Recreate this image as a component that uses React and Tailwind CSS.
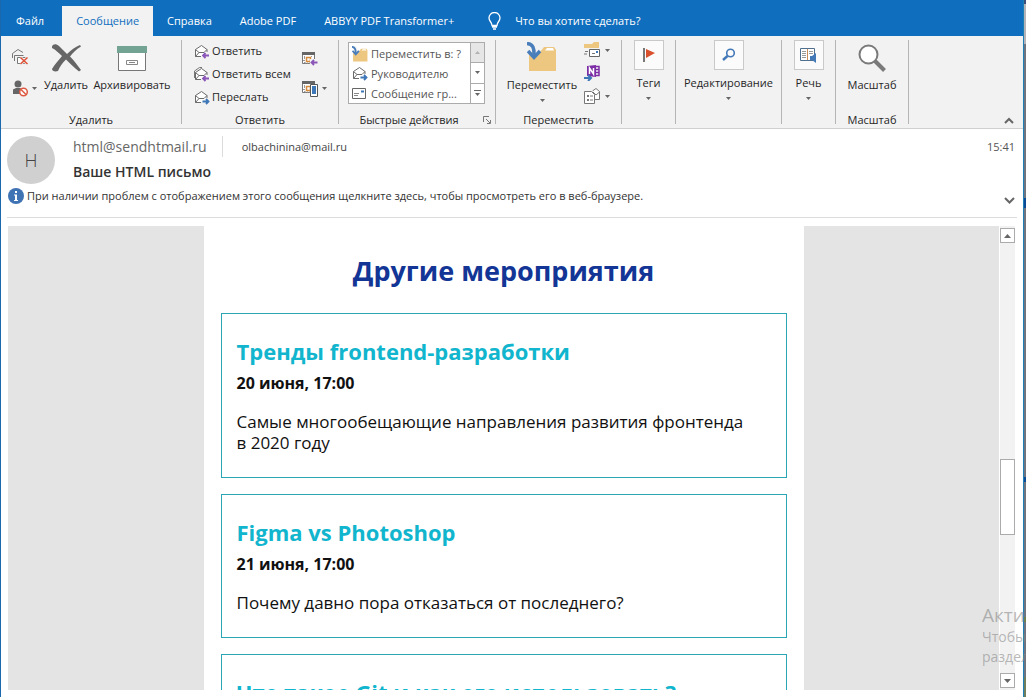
import React from 'react';

const ribbonFont = 'font-["Open_Sans","Noto_Sans",sans-serif]';

function Caret({ className = '' }) {
  return (
    <svg className={className} width="5" height="3" viewBox="0 0 5 3" aria-hidden="true">
      <path d="M0 0h5L2.5 3z" fill="#666" />
    </svg>
  );
}

function ScrollArrow({ className = '' }) {
  return (
    <svg className={className} width="7" height="4" viewBox="0 0 7 4" aria-hidden="true">
      <path d="M0 0h7L3.500 4z" fill="#666" />
    </svg>
  );
}

function Envelope({ arrow, stacked }) {
  return (
    <svg width="16" height="16" viewBox="0 0 16 16" fill="none" aria-hidden="true">
      {stacked && <path d="M.5 11V4L5.500.5H8" stroke="#777" />}
      <path d="M7 12.500H1.500v-7L7.500 1.500l5.500 4V8" fill="#fff" stroke="#6b6b6b" />
      <path d="M1.500 5.500 5 8.500h5l3-3M5 8.500l-3.500 4" stroke="#6b6b6b" />
      {arrow === 'left' ? (
        <path d="M15 11.500H9.500M11.500 9 9 11.500l2.500 2.500" stroke="#8a56b8" strokeWidth="1.800" />
      ) : (
        <path d="M8.500 11.500H14M12 9l2.500 2.500L12 14" stroke="#3e77b8" strokeWidth="1.800" />
      )}
    </svg>
  );
}

function FolderIcon({ size }) {
  return (
    <svg width={size} height={size} viewBox="0 0 30 30" fill="none" aria-hidden="true">
      <path d="M2 10h11l4-5h10l2 3v21H2z" fill="#edc77f" />
      <path d="M18 8.500 20 6h6l1 2.500z" fill="#fff" />
      <path d="M1 1.500C7 1.500 8 6 7.500 14" stroke="#f2f2f2" strokeWidth="6" />
      <path d="M0 1.500C6 2 7.500 6 7 15" stroke="#4a7ebb" strokeWidth="3.500" />
      <path d="m1 9 6 6.500L13 9" stroke="#4a7ebb" strokeWidth="3.500" />
    </svg>
  );
}

function CleanupIcon() {
  return (
    <svg width="17" height="16" viewBox="0 0 17 16" fill="none" aria-hidden="true">
      <path d="M.5 9V4.500L6 .5l5 3M2.500 12V6.500h9" stroke="#777" />
      <path d="M5.500 8.500h8v6h-8z" fill="#fff" stroke="#777" />
      <path d="m8.500 8.500 7 6.500M15.500 8.500l-7 6.500" stroke="#f2f2f2" strokeWidth="3" />
      <path d="m8.500 8.500 7 6.500M15.500 8.500l-7 6.500" stroke="#e0533a" strokeWidth="1.600" />
    </svg>
  );
}

function JunkIcon() {
  return (
    <svg width="17" height="17" viewBox="0 0 17 17" fill="none" aria-hidden="true">
      <circle cx="6" cy="4" r="3.500" fill="#666" />
      <path d="M1 14V9.500L4 8h4l3 1.500V14z" fill="#666" />
      <circle cx="11.500" cy="12" r="3.800" fill="#fff" stroke="#dd5a42" strokeWidth="1.500" />
      <path d="m9 9.500 5 5" stroke="#dd5a42" strokeWidth="1.500" />
    </svg>
  );
}

function DeleteIcon() {
  return (
    <svg width="30" height="28" viewBox="0 0 30 28" fill="#666" aria-hidden="true">
      <path d="M1 2.500C2 0 5-.5 8 2l8 8c4-4 8-7 13-9l1 1.500c-5 3-8 6-11 10 4 4 7 8 11 13.500l-2 1.500c-5-4-9-8-13-12-4 4-6 7-8 11.500-3 1-6 0-6-2 3-5 6-8 10-13C7 8.500 5 6 1 4z" />
    </svg>
  );
}

function ArchiveIcon() {
  return (
    <svg width="30" height="26" viewBox="0 0 30 26" fill="none" aria-hidden="true">
      <path d="M1.500 6.500h27v18h-27z" fill="#fff" stroke="#777" />
      <path d="M0 0h30v7H0z" fill="#73a493" />
      <path d="M9.500 14.500h11v4h-11zM12 16.500h6" stroke="#888" />
    </svg>
  );
}

function CalendarIcon({ phone }) {
  return (
    <svg width="16" height="17" viewBox="0 0 16 17" fill="none" aria-hidden="true">
      <path d="M.5 1.500h12v11H.5z" fill="#fff" stroke="#777" />
      <path d="M0 1h13v3H0z" fill="#666" />
      <path d="M2.500 5v7M5 6.500h1M9.500 5v2M1 9.500h1.500M2 6.500h8M3 12h7" stroke="#999" strokeDasharray="1 1" />
      <path d="M4.500 6.500h4v4h-4z" stroke="#d58a3c" strokeWidth="1.500" />
      {phone ? (
        <>
          <path d="M8.500 4.500h7v12h-7z" fill="#fff" stroke="#555" />
          <path d="M10 6h4v8h-4z" fill="#3e77b8" />
        </>
      ) : (
        <>
          <path d="M8 8h8v7H8z" fill="#f2f2f2" />
          <path d="M15.500 11.500H9.500M12 9l-2.500 2.500L12 14" stroke="#8a56b8" strokeWidth="1.800" />
        </>
      )}
    </svg>
  );
}

function MessageIcon() {
  return (
    <svg width="15" height="12" viewBox="0 0 15 12" fill="none" aria-hidden="true">
      <path d="M.5.5h13v10H.5z" fill="#fff" stroke="#666" />
      <path d="M2 5.500h5M2 7.500h4" stroke="#888" />
      <path d="M9 2.500h3v2H9z" fill="#3e77b8" />
    </svg>
  );
}

function RulesIcon() {
  return (
    <svg width="16" height="16" viewBox="0 0 16 16" fill="none" aria-hidden="true">
      <path d="M0 2h8l2-2h5v6H0z" fill="#edc77f" />
      <path d="M5.500 7.500h10v7h-10z" fill="#fff" stroke="#666" />
      <path d="M1 9.500h3M0 12h3M8 11.500h3" stroke="#777" />
      <path d="M12 9h2v2h-2z" fill="#3e77b8" />
    </svg>
  );
}

function OneNoteIcon() {
  return (
    <svg width="16" height="16" viewBox="0 0 16 16" fill="none" aria-hidden="true">
      <path d="M3 1 12 0v12l-9-1z" fill="#7d2da6" />
      <path d="M5.500 9V3l4 6V3" stroke="#fff" strokeWidth="1.500" />
      <path d="M12 1.500h3v9h-3M12 4.500h3M12 7.500h3" stroke="#7d2da6" strokeWidth="1.500" />
      <path d="M0 13h6M4 10l3 3-3 3" stroke="#3e77b8" strokeWidth="2" />
    </svg>
  );
}

function ActionsIcon() {
  return (
    <svg width="17" height="16" viewBox="0 0 17 16" fill="none" aria-hidden="true">
      <path d="M8.500 3 12 .5l3.500 3v8H9" fill="#fff" stroke="#777" />
      <path d="m9 4 3 3 3.500-3" stroke="#777" />
      <path d="M.5 3.500h7l3 3v9H.5z" fill="#fff" stroke="#777" />
      <path d="M3 7h2v2H3zM3 11h2v2H3z" fill="#777" />
      <path d="M6 8h3M6 12h3" stroke="#777" />
    </svg>
  );
}

function FlagIcon() {
  return (
    <svg width="14" height="16" viewBox="0 0 14 16" aria-hidden="true">
      <path d="M1 1h2v14H1z" fill="#777" />
      <path d="m4 2 9 4-9 5z" fill="#d9512c" />
    </svg>
  );
}

function SearchIcon() {
  return (
    <svg width="14" height="14" viewBox="0 0 14 14" fill="none" aria-hidden="true">
      <circle cx="8.500" cy="5" r="3.800" stroke="#4479b8" strokeWidth="1.600" />
      <path d="M5.500 8 1 12" stroke="#4479b8" strokeWidth="2.400" />
    </svg>
  );
}

function BookIcon() {
  return (
    <svg width="17" height="16" viewBox="0 0 17 16" fill="none" aria-hidden="true">
      <path d="M.5 1.500h7v12h-7zM7.500 1.500h7v12h-7z" fill="#fff" stroke="#4f6f8f" />
      <path d="M2 4.500h4M2 6.500h4M2 8.500h4M2 10.500h4M9 4.500h4M9 6.500h4" stroke="#999" />
      <path d="M7.500 2v11" stroke="#c98b55" />
      <path d="M10 9h2l4-3v10l-4-3h-2z" fill="#4479b8" />
    </svg>
  );
}

function ZoomIcon() {
  return (
    <svg width="28" height="28" viewBox="0 0 28 28" fill="none" aria-hidden="true">
      <circle cx="10.500" cy="10.500" r="9" fill="#fff" stroke="#7a7a7a" strokeWidth="2" />
      <path d="m17 17 9.500 9.500" stroke="#7a7a7a" strokeWidth="4" />
    </svg>
  );
}

function Group({ label, className, children, launcher }) {
  return (
    <section className={`relative flex shrink-0 flex-col border-r border-[#b5b5b5] ${className}`}>
      <div className="flex flex-1">{children}</div>
      {label && <h2 className="-mb-1 h-4 text-center leading-4">{label}</h2>}
      {launcher}
    </section>
  );
}

function BoxedButton({ label, icon }) {
  return (
    <button className="flex w-full flex-col items-center">
      <span className="flex size-[30px] items-center justify-center border border-[#c9c9c9] bg-[#fbfbfb]">{icon}</span>
      <span className="mt-[3px] leading-5">{label}</span>
      <Caret className="mt-1" />
    </button>
  );
}

function Tab({ children }) {
  return <button className="px-[14px]">{children}</button>;
}

function EventCard({ title, date, children }) {
  return (
    <article className="border border-[#2ba6b5] px-[15px] pt-[23px] pb-6">
      <h2 className="text-[22px] leading-7 font-bold text-[#11b5cd]">{title}</h2>
      <p className="mt-2 text-[16px] leading-5 font-bold">{date}</p>
      <p className="mt-[18px] text-[17px] leading-[21px]">{children}</p>
    </article>
  );
}

const quickSteps = [
  { label: 'Переместить в: ?', icon: <FolderIcon size={16} /> },
  { label: 'Руководителю', icon: <Envelope arrow="right" /> },
  { label: 'Сообщение гр...', icon: <MessageIcon /> },
];

export default function App() {
  return (
    <div className={`relative flex h-screen overflow-hidden bg-[#6e7480] text-[11px] text-[#262626] ${ribbonFont}`}>
      <div className="flex min-w-0 flex-1 flex-col border-x border-l-[#1c68ad] border-r-[#1e7fb4] bg-white">
        <nav className="flex h-9 shrink-0 items-stretch bg-[#106ebe] pt-[6px] text-white">
          <button className="pr-[18px] pl-[15px]">Файл</button>
          <button className="bg-[#f2f2f2] px-[14px] text-[#106ebe]">Сообщение</button>
          <Tab>Справка</Tab>
          <Tab>Adobe PDF</Tab>
          <Tab>ABBYY PDF Transformer+</Tab>
          <button className="ml-5 flex items-center gap-[14px]">
            <svg width="13" height="18" viewBox="0 0 13 18" fill="none" stroke="#fff" strokeWidth="1.300" aria-hidden="true">
              <path d="M4 13.500C4 10 1 9.500 1 6a5.500 5.500 0 0 1 11 0c0 3.500-3 4-3 7.500zM4 15h5M5 17h3" />
            </svg>
            Что вы хотите сделать?
          </button>
        </nav>

        <div className="flex h-[93px] shrink-0 border-b border-[#d0d0d0] bg-[#f2f2f2] pt-1 pb-1">
          <Group label="Удалить" className="w-[181px]">
            <div className="flex w-10 flex-col gap-[15px] pt-[9px] pl-[11px]">
              <button aria-label="Очистить"><CleanupIcon /></button>
              <button aria-label="Нежелательная почта" className="flex items-center gap-[3px]">
                <JunkIcon />
                <Caret className="shrink-0" />
              </button>
            </div>
            <button className="flex w-[50px] flex-col items-center pt-1">
              <DeleteIcon />
              <span className="mt-[3px] leading-5">Удалить</span>
            </button>
            <button className="flex flex-1 flex-col items-center pt-[6px] pr-2">
              <ArchiveIcon />
              <span className="mt-[3px] leading-5">Архивировать</span>
            </button>
          </Group>

          <Group label="Ответить" className="w-[157px]">
            <div className="flex flex-1 flex-col pl-3">
              <button className="flex h-[23px] items-center gap-[2px]"><Envelope arrow="left" />Ответить</button>
              <button className="flex h-[23px] items-center gap-[2px]"><Envelope arrow="left" stacked />Ответить всем</button>
              <button className="flex h-[23px] items-center gap-[2px]"><Envelope arrow="right" />Переслать</button>
            </div>
            <div className="flex w-9 flex-col gap-3 pt-[11px]">
              <button aria-label="Собрание"><CalendarIcon /></button>
              <button aria-label="Другие ответы" className="flex items-center gap-1">
                <CalendarIcon phone />
                <Caret />
              </button>
            </div>
          </Group>

          <Group
            label="Быстрые действия"
            className="w-[157px] [&>h2]:pr-4"
            launcher={
              <button aria-label="Настройка быстрых действий" className="absolute right-1 bottom-0 h-2">
                <svg className="block" width="8" height="8" viewBox="0 0 8 8" fill="none" stroke="#777" aria-hidden="true">
                  <path d="M.5 6V.5H6M3 3l4 4M7.500 4v3.500H4" />
                </svg>
              </button>
            }
          >
            <div className="mt-[2px] ml-[9px] flex h-[62px] w-[137px] border border-[#ababab] bg-white text-[#555]">
              <ul className="flex min-w-0 flex-1 flex-col pt-px">
                {quickSteps.map((step) => (
                  <li key={step.label} className="h-5">
                    <button className="flex h-5 w-full items-center gap-[3px] pl-[3px] whitespace-nowrap">
                      <span className="flex w-4 shrink-0">{step.icon}</span>
                      {step.label}
                    </button>
                  </li>
                ))}
              </ul>
              <div className="flex w-[14px] flex-col divide-y divide-[#ababab] border-l border-[#ababab]">
                <button aria-label="Вверх" className="flex flex-1 items-center justify-center bg-[#e6e6e6]"><Caret className="rotate-180 opacity-40" /></button>
                <button aria-label="Вниз" className="flex flex-1 items-center justify-center"><Caret /></button>
                <button aria-label="Ещё" className="flex flex-1 flex-col items-center justify-center gap-[2px]">
                  <span className="h-px w-[7px] bg-[#666]" />
                  <Caret />
                </button>
              </div>
            </div>
          </Group>

          <Group label="Переместить" className="w-[126px]">
            <button className="flex w-[88px] flex-col items-center pt-[2px] pl-1">
              <FolderIcon size={30} />
              <span className="mt-[3px] leading-5">Переместить</span>
              <Caret className="mt-1" />
            </button>
            <div className="flex flex-col gap-[7px] pt-[2px]">
              <button aria-label="Правила" className="flex items-center gap-[5px]"><RulesIcon /><Caret /></button>
              <button aria-label="OneNote"><OneNoteIcon /></button>
              <button aria-label="Действия" className="flex items-center gap-1"><ActionsIcon /><Caret /></button>
            </div>
          </Group>

          <Group className="w-[54px]"><BoxedButton label="Теги" icon={<FlagIcon />} /></Group>
          <Group className="w-[106px]"><BoxedButton label="Редактирование" icon={<SearchIcon />} /></Group>
          <Group className="w-[54px]"><BoxedButton label="Речь" icon={<BookIcon />} /></Group>
          <Group label="Масштаб" className="w-[73px]">
            <button className="flex w-full flex-col items-center pt-1">
              <ZoomIcon />
              <span className="mt-[3px] leading-5">Масштаб</span>
            </button>
          </Group>
          <button aria-label="Свернуть ленту" className="ml-auto self-end pr-[9px]">
            <svg width="10" height="7" viewBox="0 0 10 7" fill="none" stroke="#666" strokeWidth="2" aria-hidden="true">
              <path d="m1 6 4-4 4 4" />
            </svg>
          </button>
        </div>

        <header className="mr-[6px] ml-[6px] h-[89px] shrink-0 border-b border-[#dcdcdc] pt-[7px]">
          <div className="flex">
            <div className="flex size-12 items-center justify-center rounded-full bg-[#d0d0d0] text-[18px] font-light text-[#444]">H</div>
            <div className="ml-[18px] flex-1">
              <div className="flex h-[21px] items-center">
                <span className="text-[14px] text-[#666]">html@sendhtmail.ru</span>
                <span className="ml-[15px] h-[21px] w-px bg-[#dcdcdc]" />
                <span className="ml-[19px] pt-[2px] text-[#444]">olbachinina@mail.ru</span>
                <time className="mr-[2px] ml-auto pt-[2px] text-[#555]">15:41</time>
              </div>
              <h1 className="mt-[5px] text-[14px] leading-5 font-semibold text-[#333]">Ваше HTML письмо</h1>
            </div>
          </div>
          <div className="mt-[3px] flex items-center pl-px">
            <svg width="16" height="16" viewBox="0 0 16 16" aria-hidden="true">
              <circle cx="8" cy="8" r="8" fill="#3f73b4" />
              <path d="M7 3h2v2H7zM6 6.500h3V12h1v1H6v-1h1V7.500H6z" fill="#fff" />
            </svg>
            <button className="ml-[3px] leading-4 text-[#333]">
              При наличии проблем с отображением этого сообщения щелкните здесь, чтобы просмотреть его в веб-браузере.
            </button>
            <button aria-label="Развернуть" className="mt-[10px] mr-[2px] ml-auto">
              <svg width="11" height="7" viewBox="0 0 11 7" fill="none" stroke="#666" strokeWidth="2" aria-hidden="true">
                <path d="m1 1 4.500 4.500L10 1" />
              </svg>
            </button>
          </div>
        </header>

        <div className="mt-2 mr-2 mb-[7px] ml-[7px] flex min-h-0 flex-1">
          <main className="min-w-0 flex-1 overflow-hidden bg-[#e4e4e4]">
            <div className="mx-auto flex max-w-[600px] flex-col gap-4 bg-white px-[17px] pt-[25px] text-[#111]">
              <h1 className="mb-[6px] text-center text-[27px] leading-10 font-bold text-[#123596]">Другие мероприятия</h1>
              <EventCard title="Тренды frontend-разработки" date="20 июня, 17:00">
                Самые многообещающие направления развития фронтенда<br />в 2020 году
              </EventCard>
              <EventCard title="Figma vs Photoshop" date="21 июня, 17:00">
                Почему давно пора отказаться от последнего?
              </EventCard>
              <EventCard title="Что такое Git и как его использовать?" />
            </div>
          </main>
          <div className="ml-px flex w-[15px] flex-col bg-[#f2f2f2] py-[2px]">
            <button aria-label="Прокрутить вверх" className="flex size-[15px] items-center justify-center border border-[#ababab] bg-white"><ScrollArrow className="rotate-180" /></button>
            <div className="flex flex-1 flex-col">
              <div className="flex-[217]" />
              <div className="flex-[74] border border-[#ababab] bg-white" />
              <div className="flex-[139]" />
            </div>
            <button aria-label="Прокрутить вниз" className="flex size-[15px] items-center justify-center border border-[#ababab] bg-white"><ScrollArrow /></button>
          </div>
        </div>
      </div>
      <div className="flex w-[2px] shrink-0 flex-col">
        <div className="h-1 bg-[#3a4f78]" />
        <div className="h-10 bg-[#b4b4b8]" />
        <div className="flex-[154]" />
        <div className="h-[10px] bg-[#0b4a94]" />
        <div className="flex-[268]" />
        <div className="h-[5px] bg-[#0b4a94]" />
        <div className="flex-[135]" />
        <div className="h-[5px] bg-[#6f8050]" />
        <div className="flex-[55]" />
        <div className="h-5 bg-[#6f7f5c]" />
      </div>

      <div className="pointer-events-none absolute right-0 bottom-[30px] w-11 overflow-hidden whitespace-nowrap text-[#8a8a8a]/60">
        <p className="text-[19px] leading-6">Акти</p>
        <p className="text-[14px] leading-5">Чтобы</p>
        <p className="text-[14px] leading-5">раздел</p>
      </div>
    </div>
  );
}
